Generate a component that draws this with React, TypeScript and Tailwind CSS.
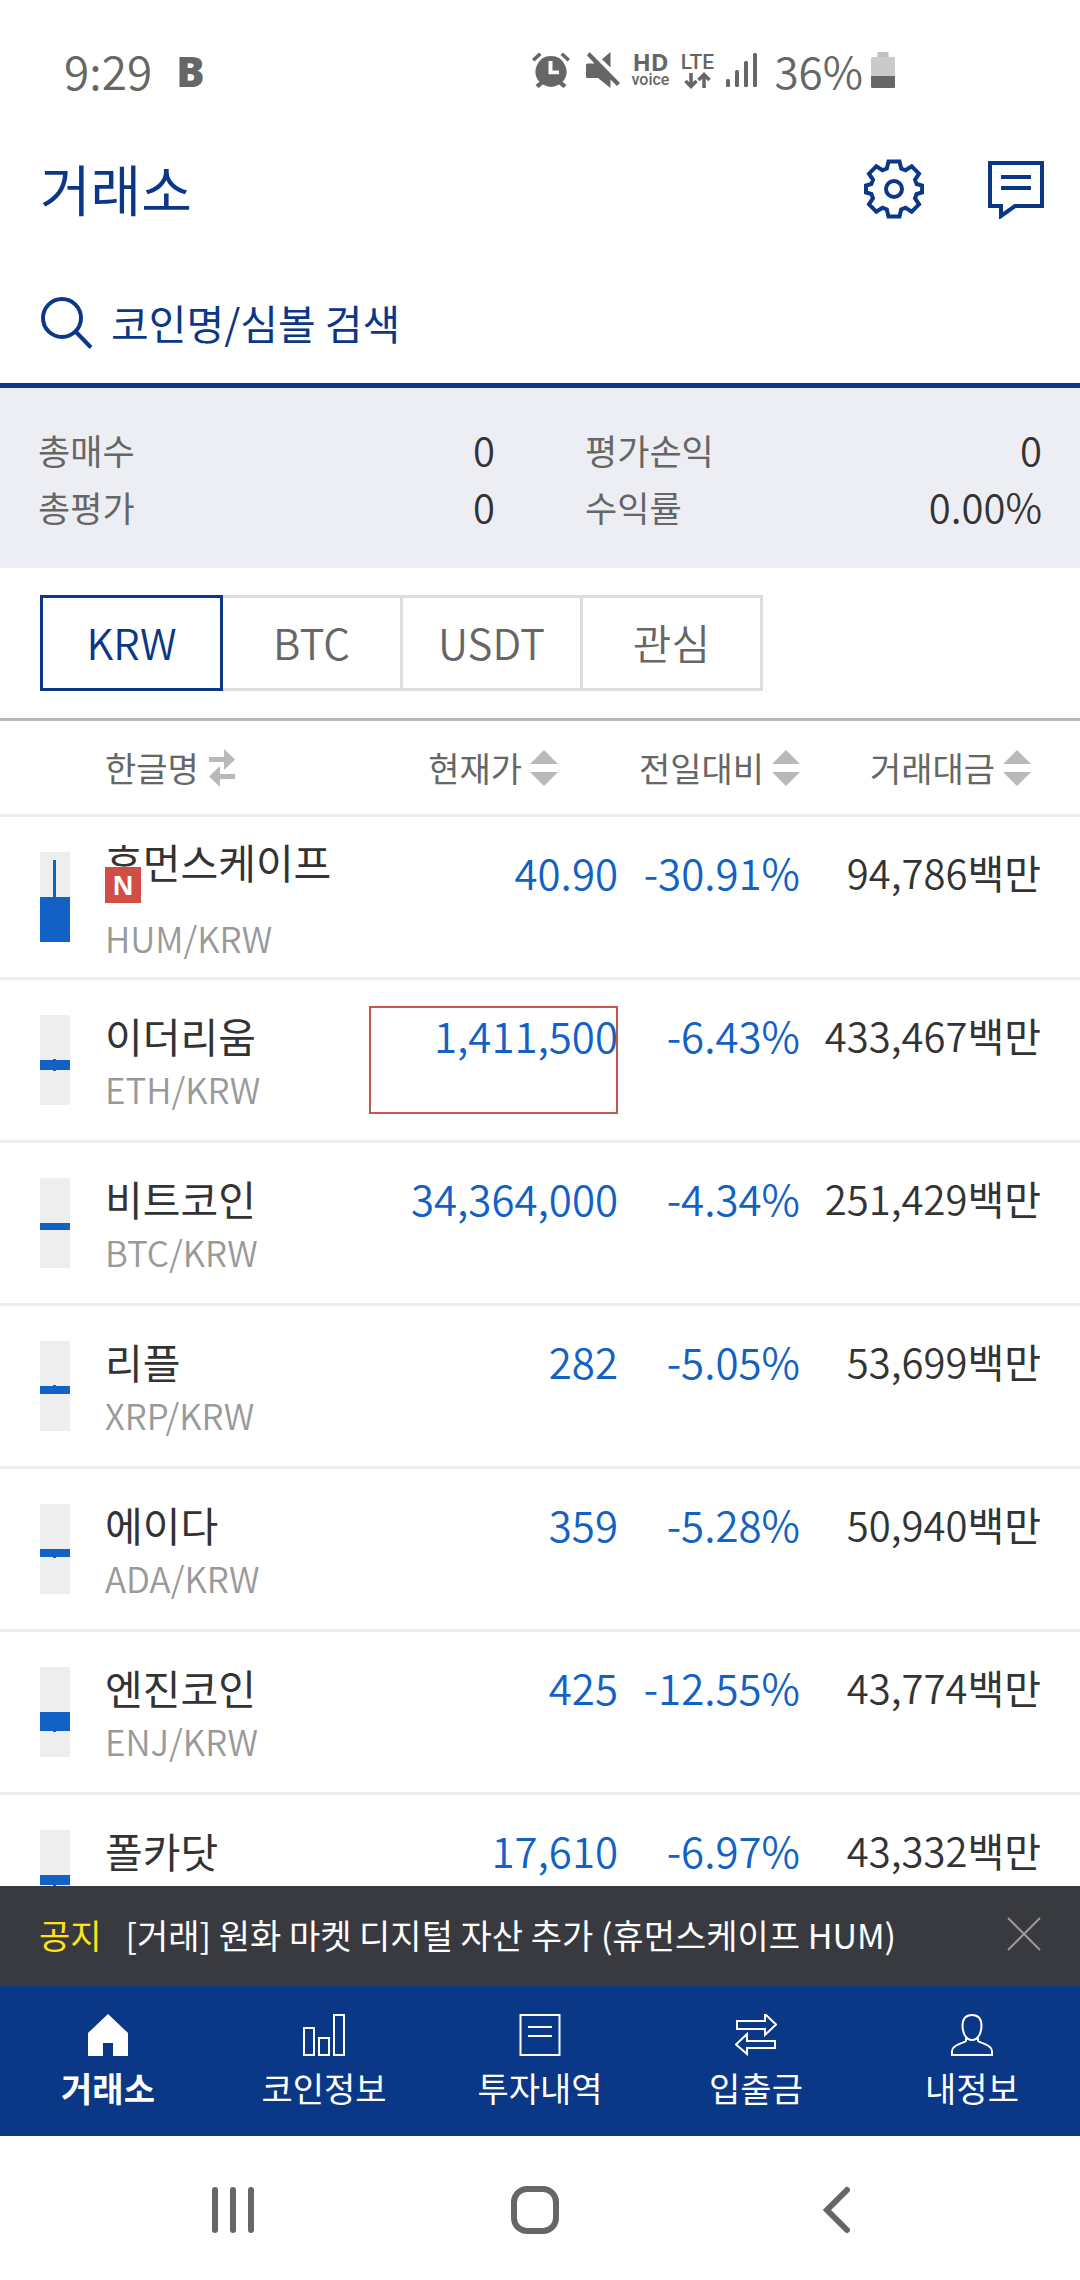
import { useState } from "react";

type Coin = {
  name: string;
  symbol: string;
  price: string;
  change: string;
  volume: string;
  body: number;
  wick: [number, number];
  isNew?: boolean;
  flash?: boolean;
};

const coins: Coin[] = [
  { name: "휴먼스케이프", symbol: "HUM/KRW", price: "40.90", change: "-30.91%", volume: "94,786", body: 45, wick: [8, 90], isNew: true },
  { name: "이더리움", symbol: "ETH/KRW", price: "1,411,500", change: "-6.43%", volume: "433,467", body: 10, wick: [44, 56], flash: true },
  { name: "비트코인", symbol: "BTC/KRW", price: "34,364,000", change: "-4.34%", volume: "251,429", body: 7, wick: [45, 52] },
  { name: "리플", symbol: "XRP/KRW", price: "282", change: "-5.05%", volume: "53,699", body: 8, wick: [44, 53] },
  { name: "에이다", symbol: "ADA/KRW", price: "359", change: "-5.28%", volume: "50,940", body: 8, wick: [45, 54] },
  { name: "엔진코인", symbol: "ENJ/KRW", price: "425", change: "-12.55%", volume: "43,774", body: 19, wick: [45, 65] },
  { name: "폴카닷", symbol: "DOT/KRW", price: "17,610", change: "-6.97%", volume: "43,332", body: 10, wick: [45, 56] },
];

const summary = [
  { label: "총매수", value: "0" },
  { label: "평가손익", value: "0" },
  { label: "총평가", value: "0" },
  { label: "수익률", value: "0.00%" },
];

const markets = ["KRW", "BTC", "USDT", "관심"];

const StatusBar = () => (
  <div className="flex h-[140px] shrink-0 items-center justify-between pr-[185px] pl-[64px] text-[#666]">
    <div className="flex items-center gap-6">
      <span className="text-[46px] font-[350]">9:29</span>
      <span className="[font-family:'Open_Sans',sans-serif] text-[42px] font-extrabold">B</span>
    </div>
    <div className="flex items-center">
      {/* Alarm */}
      <svg className="h-9 w-[38px]" viewBox="0 0 38 36" fill="currentColor" aria-hidden="true">
        <path d="M0 7 7 .5l2.500 2.500L2.500 9.500ZM38 7 31 .5l-2.500 2.500 7 6.500Z" />
        <path
          fillRule="evenodd"
          d="M19 4a15.500 15.500 0 0 0-11.500 25.800L3.500 33l3 3 4.500-3.500a15.500 15.500 0 0 0 16 0l4.500 3.500 3-3-4-3.200A15.500 15.500 0 0 0 19 4Zm-2.500 5h4v9.500h6.500v3.800H16.500Z"
        />
      </svg>
      {/* Muted speaker */}
      <svg className="ml-4 h-9 w-[34px]" viewBox="0 0 34 36" fill="currentColor" aria-hidden="true">
        <path d="M24.500 0v15.500L16 7.300ZM3.500 0 34 31l-3 3-6.500-6.500V36L12 26H1.500Q0 26 0 24.500V13q0-1.500 1.500-1.500h7L1 3.500Z" />
      </svg>
      <div className="ml-3 flex w-9 flex-col items-center">
        <span className="[font-family:'Open_Sans',sans-serif] text-[24px] leading-5 font-bold">HD</span>
        <span className="[font-family:Roboto,sans-serif] text-[16px] leading-4 font-medium">voice</span>
      </div>
      <div className="ml-3 flex w-[34px] flex-col items-center">
        <span className="[font-family:Roboto,sans-serif] text-[21px] leading-5 font-medium">LTE</span>
        <svg className="h-[17px] w-[27px]" viewBox="0 0 27 17" fill="none" stroke="currentColor" strokeWidth="3.500" aria-hidden="true">
          <path d="M7 1v13M1.500 9 7 14.500 12.500 9M20 16V3M14.500 8 20 2.500 25.500 8" />
        </svg>
      </div>
      <svg className="ml-3 h-[34px] w-8" viewBox="0 0 32 34" fill="currentColor" aria-hidden="true">
        <rect x="0" y="26" width="4" height="8" rx="1.500" />
        <rect x="9" y="17" width="4" height="17" rx="1.500" />
        <rect x="18" y="8" width="4" height="26" rx="1.500" />
        <rect x="27" y="0" width="4" height="34" rx="1.500" />
      </svg>
      <span className="ml-4 text-[44px] font-[350]">36%</span>
      <svg className="ml-2 h-9 w-6" viewBox="0 0 24 36" aria-hidden="true">
        <rect x="6.500" width="11" height="7" rx="1" fill="#c0c0c0" />
        <rect y="5" width="24" height="28" rx="1.500" fill="#cacaca" />
        <path d="M0 24h24v10.500q0 1.500-1.500 1.500h-21Q0 36 0 34.500Z" fill="#666" />
      </svg>
    </div>
  </div>
);

const Header = () => (
  <header className="flex h-[98px] shrink-0 items-center justify-between pr-[35px] pl-10 text-[#0b3788]">
    <h1 className="pb-1 text-[55px] leading-[70px] font-normal">거래소</h1>
    <div className="flex items-center gap-16">
      <button type="button" aria-label="설정">
        <svg className="block h-[60px] w-[60px]" viewBox="0 0 60 60" fill="none" stroke="currentColor" strokeWidth="4">
          <path d="M24.500 2.500h11l1.700 7 4.300 1.800 6.200-4 7.300 7.400-4 6.100 1.700 4.200 5.300 1.500v7l-5.300 1.500-1.700 4.200 4 6.100-7.300 7.400-6.200-4-4.300 1.800-1.700 7h-11l-1.700-7-4.300-1.800-6.200 4-7.300-7.400 4-6.100-1.700-4.200L2 33.500v-7L7.300 25 9 20.800l-4-6.100 7.300-7.400 6.200 4 4.300-1.800Z" />
          <circle cx="30" cy="30" r="8" />
        </svg>
      </button>
      <button type="button" aria-label="메시지">
        <svg className="block h-[60px] w-[57px]" viewBox="0 0 57 60" fill="none" stroke="currentColor" strokeWidth="4">
          <path d="M2 4h52v43H27L13 57V47H2ZM13 18h30M13 29h30" />
        </svg>
      </button>
    </div>
  </header>
);

const SearchBar = () => (
  <label className="flex h-[150px] shrink-0 items-center gap-[18px] border-b-5 border-[#0b3788] pt-6 pl-[41px] text-[#0b3788]">
    <svg className="h-[52px] w-[52px] shrink-0" viewBox="0 0 52 52" fill="none" stroke="currentColor" strokeWidth="4" aria-hidden="true">
      <circle cx="21" cy="21" r="19" />
      <path d="m35 35 15 15.500" />
    </svg>
    <span className="sr-only">코인 검색</span>
    <input
      type="text"
      placeholder="코인명/심볼 검색"
      className="min-w-0 flex-1 text-[41px] font-normal outline-none placeholder:text-[#0b3788]"
    />
  </label>
);

const Summary = () => (
  <dl className="grid shrink-0 grid-cols-2 gap-x-[90px] bg-[#edeef4] px-[38px] py-[33px] leading-[57px]">
    {summary.map(({ label, value }) => (
      <div key={label} className="flex justify-between">
        <dt className="text-[35px] text-[#666]">{label}</dt>
        <dd className="text-[40px] font-[350] text-[#333]">{value}</dd>
      </div>
    ))}
  </dl>
);

const SortIcon = () => (
  <svg className="h-9 w-7" viewBox="0 0 28 36" fill="#b9b9b9" aria-hidden="true">
    <path d="M14 0 28 14H0ZM0 22h28L14 36Z" />
  </svg>
);

const Candle = ({ body, wick }: { body: number; wick: [number, number] }) => (
  <svg className="h-[90px] w-[30px] shrink-0" viewBox="0 0 30 90" aria-hidden="true">
    <rect width="30" height="90" fill="#eee" />
    <rect x="13" y={wick[0]} width="3" height={wick[1] - wick[0]} fill="#1261c4" />
    <rect y="45" width="30" height={body} fill="#1261c4" />
  </svg>
);

const CoinRow = ({ coin }: { coin: Coin }) => (
  <tr className="[&>td]:h-[163px] [&>td]:border-b-3 [&>td]:border-[#eee]">
    <td className="pl-10">
      <div className="flex items-center gap-[35px]">
        <Candle body={coin.body} wick={coin.wick} />
        <div className="pt-1 whitespace-nowrap">
          <div className={`relative text-[41px] leading-[54px] text-[#333] ${coin.isNew ? "mb-[23px]" : ""}`}>
            {coin.name}
            {coin.isNew && (
              <span className="absolute top-[33px] left-0 flex h-9 w-9 items-center justify-center bg-[#d04e45] [font-family:'Open_Sans',sans-serif] text-[26px] font-bold text-white">
                N
              </span>
            )}
          </div>
          <div className="text-[35px] leading-[54px] font-[350] text-[#999]">{coin.symbol}</div>
        </div>
      </div>
    </td>
    <td className="relative pt-7 text-right align-top text-[42px] leading-[54px] font-[350] text-[#1261c4]">
      {coin.price}
      {coin.flash && <span className="absolute inset-x-0 top-[26px] h-[108px] border-2 border-[#c4564d]" />}
    </td>
    <td className="pt-7 text-right align-top text-[42px] leading-[54px] font-[350] text-[#1261c4]">{coin.change}</td>
    <td className="pt-7 pr-[39px] text-right align-top text-[40px] leading-[54px] font-[350] text-[#333]">
      {coin.volume}
      <span className="font-normal">백만</span>
    </td>
  </tr>
);

const CoinTable = () => (
  <div className="min-h-0 flex-1 overflow-hidden">
    <table className="w-full table-fixed border-separate border-spacing-0">
      <colgroup>
        <col />
        <col className="w-[249px]" />
        <col className="w-[182px]" />
        <col className="w-[280px]" />
      </colgroup>
      <thead>
        <tr className="text-[34px] text-[#666] [&>th]:h-24 [&>th]:border-b-3 [&>th]:border-[#eee] [&>th]:font-normal">
          <th className="pl-[105px]">
            <button type="button" className="flex items-center gap-[10px] whitespace-nowrap">
              한글명
              <svg className="h-[38px] w-[26px]" viewBox="0 0 26 38" fill="#b9b9b9" aria-hidden="true">
                <path d="M0 8h15V0l11 10.500L15 21v-8H0ZM26 25H11v-8L0 27.500 11 38v-8h15Z" />
              </svg>
            </button>
          </th>
          <th className="pr-[60px]">
            <button type="button" className="ml-auto flex items-center gap-2 whitespace-nowrap">
              현재가
              <SortIcon />
            </button>
          </th>
          <th>
            <button type="button" className="ml-auto flex items-center gap-2 whitespace-nowrap">
              전일대비
              <SortIcon />
            </button>
          </th>
          <th className="pr-[49px]">
            <button type="button" className="ml-auto flex items-center gap-2 whitespace-nowrap">
              거래대금
              <SortIcon />
            </button>
          </th>
        </tr>
      </thead>
      <tbody>
        {coins.map((coin) => (
          <CoinRow key={coin.symbol} coin={coin} />
        ))}
      </tbody>
    </table>
  </div>
);

const navItems = [
  { label: "거래소", icon: <path d="m21 0 20 19v23H26V29H16v13H1V19Z" fill="currentColor" stroke="none" /> },
  { label: "코인정보", icon: <path d="M1 14h10v27H1ZM16 24h10v17H16ZM31 1h10v40H31Z" /> },
  { label: "투자내역", icon: <path d="M1.500 1h39v40h-39ZM9 13h24M9 22h24" /> },
  { label: "입출금", icon: <path d="M2 7h28V0l11 10.500L30 21v-6H2ZM40 27H12v-7L1 30.500 12 40v-6h28Z" /> },
  {
    label: "내정보",
    icon: (
      <path d="M21 1c-7 0-9.500 4-9.500 11 0 6 3 14 9.500 14s9.500-8 9.500-14c0-7-2.500-11-9.500-11ZM15 23v4c-1 2-14 3-14 10v4h40v-4c0-7-13-8-14-10v-4" />
    ),
  },
];

export default function App() {
  const [market, setMarket] = useState("KRW");

  return (
    <div className="flex h-screen flex-col bg-white [font-family:'Noto_Sans_CJK_KR',sans-serif]">
      <StatusBar />
      <Header />
      <SearchBar />
      <Summary />

      {/* Market tabs */}
      <div className="flex shrink-0 border-b-3 border-[#b9b9b9] px-10 py-[27px]">
        {markets.map((m) => (
          <button
            key={m}
            type="button"
            onClick={() => setMarket(m)}
            className={`-mr-[3px] h-24 w-[183px] border-3 pb-1 text-[42px] font-[350] ${
              m === market ? "relative z-10 border-[#0b3788] text-[#0b3788]" : "border-[#ddd] text-[#666]"
            }`}
          >
            {m}
          </button>
        ))}
      </div>

      <CoinTable />

      {/* Notice */}
      <div className="flex h-[100px] shrink-0 items-center bg-[#383a3f] px-[39px] pb-1 text-[34px] text-white">
        <strong className="font-normal text-[#ffe21a]">공지</strong>
        <a href="#notice" className="ml-6 flex-1 truncate">
          [거래] 원화 마켓 디지털 자산 추가 (휴먼스케이프 HUM)
        </a>
        <button type="button" aria-label="닫기">
          <svg className="block h-[34px] w-[34px]" viewBox="0 0 34 34" stroke="#999" strokeWidth="2">
            <path d="m1 1 32 32M33 1 1 33" />
          </svg>
        </button>
      </div>

      {/* Bottom navigation */}
      <nav className="grid h-[150px] shrink-0 grid-cols-5 bg-[#0a3786] text-white">
        {navItems.map(({ label, icon }, i) => (
          <a
            key={label}
            href="#"
            className={`flex flex-col items-center gap-3 pt-7 text-[34px] leading-10 ${i === 0 ? "font-bold" : "font-normal"}`}
          >
            <svg className="h-[42px] w-[42px]" viewBox="0 0 42 42" fill="none" stroke="currentColor" strokeWidth="2" aria-hidden="true">
              {icon}
            </svg>
            {label}
          </a>
        ))}
      </nav>

      {/* System buttons */}
      <div className="grid h-36 shrink-0 grid-cols-3 items-center justify-items-center pt-1 pr-[92px] pl-[82px] text-[#666]">
        <button type="button" aria-label="최근 앱">
          <svg className="h-12 w-[42px]" viewBox="0 0 42 48" stroke="currentColor" strokeWidth="6" strokeLinecap="round">
            <path d="M3 4v40M21 4v40M39 4v40" />
          </svg>
        </button>
        <button type="button" aria-label="홈">
          <svg className="h-12 w-12" viewBox="0 0 48 48" fill="none" stroke="currentColor" strokeWidth="6">
            <rect x="3" y="3" width="42" height="42" rx="13" />
          </svg>
        </button>
        <button type="button" aria-label="뒤로">
          <svg className="h-12 w-7" viewBox="0 0 28 48" fill="none" stroke="currentColor" strokeWidth="6" strokeLinecap="round">
            <path d="M24 4 4 24l20 20" />
          </svg>
        </button>
      </div>
    </div>
  );
}
